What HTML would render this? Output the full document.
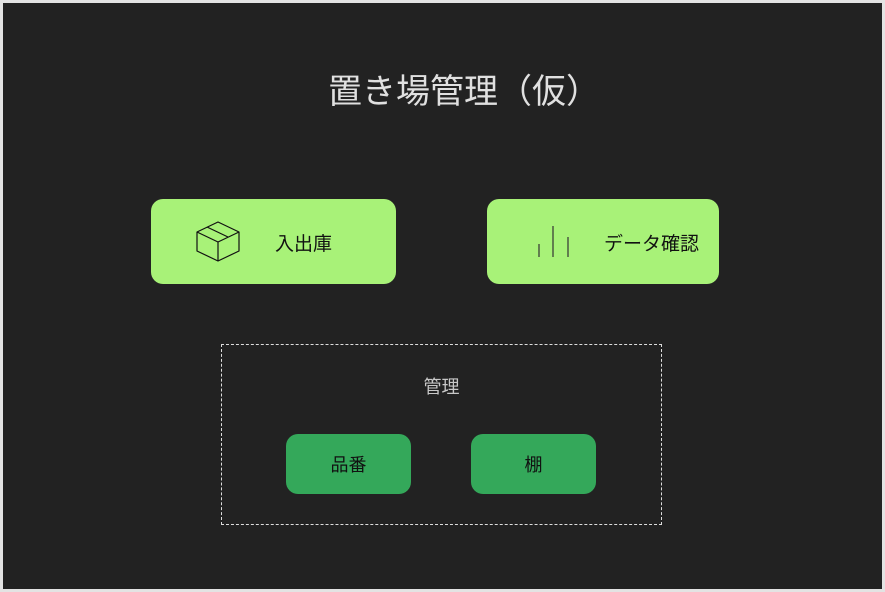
<!DOCTYPE html>
<html><head><meta charset="utf-8"><style>
*{margin:0;padding:0;box-sizing:border-box}
html,body{width:885px;height:592px;overflow:hidden;background:#e3e3e3}
.f{position:absolute;left:3px;top:3px;width:879px;height:586px;background:#222222}
body{font-family:"Liberation Sans","Noto Sans CJK JP",sans-serif}
.t{position:absolute;left:328px;top:70px;font-size:34px;color:#e0e0e0;line-height:44px;white-space:nowrap}
.b{position:absolute;background:#a8f278;border-radius:12px;color:#111;font-size:19px}
.g{position:absolute;background:#34a85a;border-radius:12px;color:#111;font-size:18px;text-align:center;line-height:62px}
.d{position:absolute;left:221px;top:344px;width:441px;height:181px;border:1px dashed #ddd}
</style></head><body>
<div class="f"></div>
<div class="t">置き場管理（仮）</div>
<div class="b" style="left:151px;top:199px;width:245px;height:85px">
<svg style="position:absolute;left:42px;top:20px" width="50" height="46" viewBox="0 0 50 46"><g fill="none" stroke="#111" stroke-width="1.2" stroke-linejoin="round"><path d="M4 13 L25 3 L46 13 L46 32 L25 42 L4 32 Z"/><path d="M4 13 L25 23 L46 13 M25 23 L25 42 M14 8 L35 18"/></g></svg>
<span style="position:absolute;left:124px;top:30px">入出庫</span></div>
<div class="b" style="left:487px;top:199px;width:232px;height:85px">
<svg style="position:absolute;left:45px;top:24px" width="40" height="36" viewBox="0 0 40 36"><g stroke="#333" stroke-width="1.2"><path d="M7 21V34M21 3V34M36 14V34"/></g></svg>
<span style="position:absolute;left:117px;top:30px">データ確認</span></div>
<div class="d"></div>
<div style="position:absolute;left:221px;width:441px;top:373px;text-align:center;color:#c8c8c8;font-size:18px">管理</div>
<div class="g" style="left:286px;top:434px;width:125px;height:60px">品番</div>
<div class="g" style="left:471px;top:434px;width:125px;height:60px">棚</div>
</body></html>
